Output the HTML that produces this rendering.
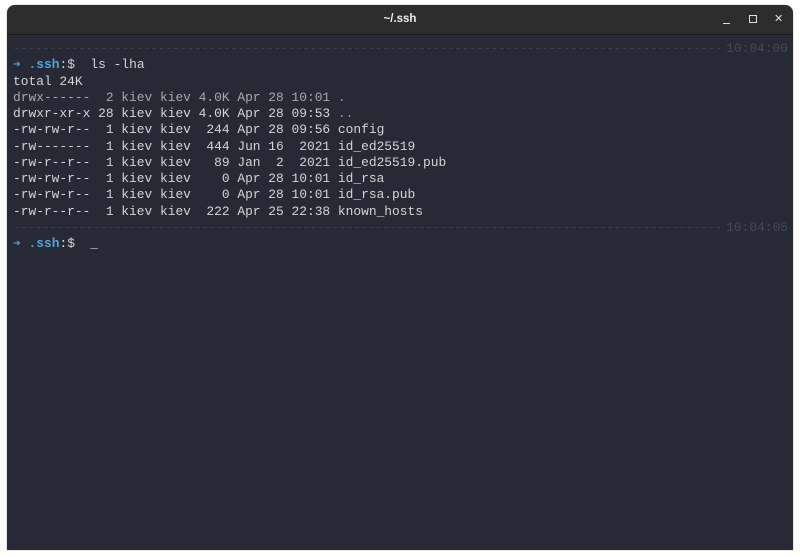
<!DOCTYPE html>
<html><head><style>
body{margin:0;width:800px;height:557px;background:#fff;position:relative;overflow:hidden;font-family:"Liberation Mono",monospace}
.win{position:absolute;left:7px;top:5px;width:786px;height:545px;background:#272a35;border-radius:8px 8px 0 0;overflow:hidden;box-shadow:0 0 1px #666}
.tb{height:29px;background:#2d2d2d;border-bottom:1px solid #1a1a1a;color:#eee;font-family:"Liberation Sans",sans-serif;font-weight:bold;font-size:11.5px;text-align:center;line-height:29px}
.ctl{position:absolute;top:0;height:29px;line-height:29px;color:#ddd;font-family:"Liberation Sans",sans-serif;font-size:11px}
.term{position:absolute;left:6px;top:36px;right:0;font-size:12.9px;line-height:16.25px;color:#d4d4d4;white-space:pre}
.sep{position:relative;height:16.25px;color:#3b3f4c;overflow:hidden;letter-spacing:-0.5px}
.sep span{position:absolute;right:0;top:0;background:#272a35;color:#454957;padding:0 5px 0 6px;letter-spacing:0}
.dim{color:#a8a8a8}.p{color:#a97fe9}.b{color:#4ea5dc}.bb{color:#4ea5dc;font-weight:bold}
</style></head><body>
<div class="win">
<div class="tb">~/.ssh</div>
<div style="position:absolute;left:716px;top:18px;width:7px;height:1px;background:#ddd"></div>
<div class="ctl" style="left:742px;"><span style="display:inline-block;width:6px;height:6px;border:1px solid #ddd;vertical-align:middle"></span></div>
<div class="ctl" style="left:767px">✕</div>
<div class="term"><div class="sep">------------------------------------------------------------------------------------------------------------------<span>10:04:00</span></div><span class="b">➔</span> <span class="bb">.ssh</span>:$  ls -lha
total 24K
<span class="dim">drwx------  2 kiev kiev 4.0K Apr 28 10:01 </span><span class="p">.</span>
drwxr-xr-x 28 kiev kiev 4.0K Apr 28 09:53 <span class="p">..</span>
-rw-rw-r--  1 kiev kiev  244 Apr 28 09:56 config
-rw-------  1 kiev kiev  444 Jun 16  2021 id_ed25519
-rw-r--r--  1 kiev kiev   89 Jan  2  2021 id_ed25519.pub
-rw-rw-r--  1 kiev kiev    0 Apr 28 10:01 id_rsa
-rw-rw-r--  1 kiev kiev    0 Apr 28 10:01 id_rsa.pub
-rw-r--r--  1 kiev kiev  222 Apr 25 22:38 known_hosts
<div class="sep">------------------------------------------------------------------------------------------------------------------<span>10:04:05</span></div><span class="b">➔</span> <span class="bb">.ssh</span>:$  _</div>
</div>
</body></html>
